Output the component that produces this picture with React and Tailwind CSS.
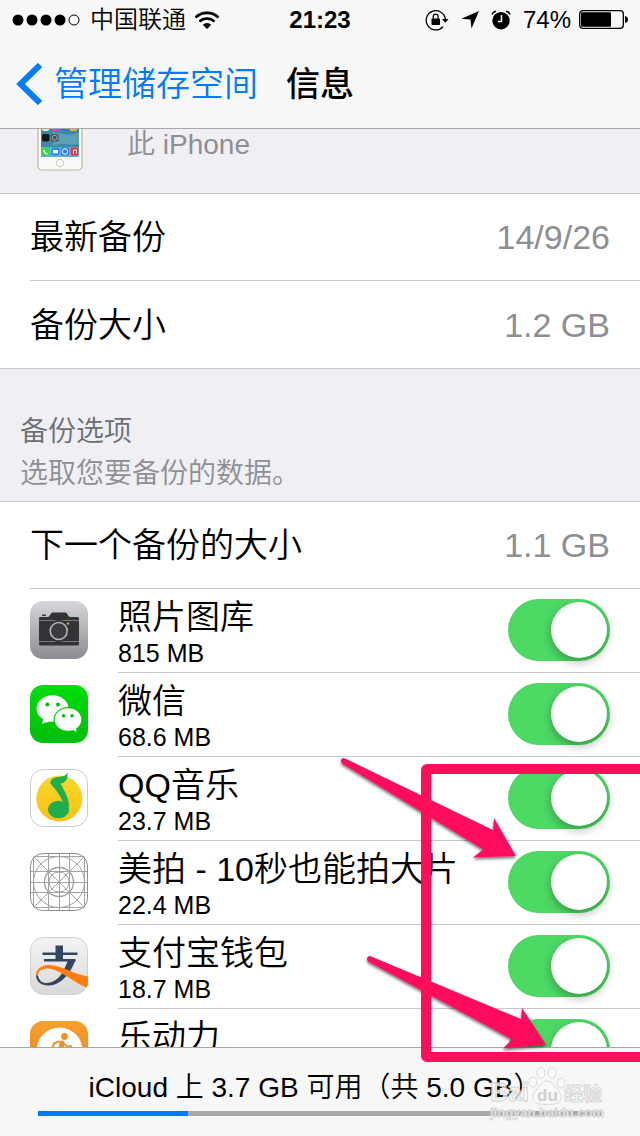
import { useState } from 'react';

const PhotosIcon = () => (
  <svg viewBox="0 0 58 58" className="h-full w-full" aria-hidden="true">
    <defs>
      <linearGradient id="photosBg" x1="0" y1="0" x2="0" y2="1">
        <stop offset="0" stopColor="#d6d7da" />
        <stop offset="1" stopColor="#8b8d92" />
      </linearGradient>
    </defs>
    <rect width="58" height="58" rx="13" fill="url(#photosBg)" />
    <path d="M10 16h8c2 0 2.500-4.500 4.500-4.500h13c2 0 2.500 4.500 4.500 4.500h7.500a1.500 1.500 0 0 1 1.500 1.500v25.500a1.500 1.500 0 0 1-1.500 1.500h-37A1.500 1.500 0 0 1 9 43V17.500A1.500 1.500 0 0 1 10 16z" fill="#323335" />
    <rect x="12" y="13.500" width="4" height="1.500" rx=".7" fill="#323335" />
    <path d="M9 19.500h40M9 40.500h40" stroke="#77797c" strokeWidth="1" />
    <circle cx="28.700" cy="30" r="11" fill="#323335" />
    <circle cx="28.700" cy="30" r="8.500" fill="#3b3c3f" stroke="#b4b5b8" strokeWidth="1.600" />
    <circle cx="38" cy="22.500" r="1.200" fill="#e0a030" />
  </svg>
);

const WeChatIcon = () => (
  <svg viewBox="0 0 58 58" className="h-full w-full" aria-hidden="true">
    <defs>
      <linearGradient id="wechatBg" x1="0" y1="0" x2="0" y2="1">
        <stop offset="0" stopColor="#00de0c" />
        <stop offset="1" stopColor="#00be0a" />
      </linearGradient>
    </defs>
    <rect width="58" height="58" rx="13" fill="url(#wechatBg)" />
    <path d="M12 39l1.500-6.500 7 3.500z" fill="#fff" />
    <ellipse cx="22.500" cy="23.500" rx="16" ry="13.200" fill="#fff" />
    <circle cx="17.300" cy="19.500" r="2" fill="#00b80a" />
    <circle cx="28" cy="19.500" r="2" fill="#00b80a" />
    <ellipse cx="38" cy="34.500" rx="14.500" ry="12.500" fill="#00cc0b" />
    <path d="M46.500 47l-6-3.500 5.500-2z" fill="#fff" />
    <ellipse cx="38" cy="34.500" rx="13.300" ry="11.300" fill="#fff" />
    <circle cx="33.500" cy="30.700" r="1.700" fill="#00b80a" />
    <circle cx="42" cy="30.700" r="1.700" fill="#00b80a" />
  </svg>
);

const QQMusicIcon = () => (
  <svg viewBox="0 0 58 58" className="h-full w-full" aria-hidden="true">
    <defs>
      <linearGradient id="musicBg" x1="0" y1="0" x2="0" y2="1">
        <stop offset="0" stopColor="#fbd62c" />
        <stop offset="1" stopColor="#f8c00e" />
      </linearGradient>
    </defs>
    <rect x=".5" y=".5" width="57" height="57" rx="13" fill="#fff" stroke="#c9cacd" />
    <circle cx="29.300" cy="29.500" r="23" fill="url(#musicBg)" />
    <path d="M37.500 3.500C36 7 33 7.500 28.500 8 23 8.600 20.500 10.500 20.300 14.500c4.500 4.500 9 11 12.500 18L39 38c0-9-4-15-8.500-23.500 5-.5 8-5 7-11z" fill="#1fae4f" />
    <ellipse cx="28.500" cy="40.500" rx="10.600" ry="8.800" fill="#1fae4f" />
  </svg>
);

const BlueprintIcon = () => (
  <svg viewBox="0 0 58 58" className="h-full w-full" aria-hidden="true">
    <defs>
      <clipPath id="blueprintClip">
        <rect width="58" height="58" rx="13" />
      </clipPath>
    </defs>
    <g fill="none" stroke="#a3a3a3" strokeWidth="1" clipPath="url(#blueprintClip)">
      <path d="M3.500 0v58M18.500 0v58M29.500 0v58M39.500 0v58M54.500 0v58" />
      <path d="M0 3.500h58M0 18.500h58M0 29.500h58M0 39.500h58M0 54.500h58" />
      <path d="M0 0l58 58M58 0L0 58" />
      <circle cx="29" cy="29" r="25.500" />
      <circle cx="29" cy="29" r="14.500" strokeWidth="1.400" />
      <circle cx="29" cy="29" r="10" />
    </g>
    <rect x=".5" y=".5" width="57" height="57" rx="12.500" fill="none" stroke="#8f8f8f" />
  </svg>
);

const AlipayIcon = () => (
  <svg viewBox="0 0 58 58" className="h-full w-full" aria-hidden="true">
    <defs>
      <linearGradient id="alipayBg" x1="0" y1="0" x2="0" y2="1">
        <stop offset="0" stopColor="#f4f4f4" />
        <stop offset="1" stopColor="#d9d9d9" />
      </linearGradient>
      <clipPath id="alipayClip">
        <rect width="58" height="58" rx="13" />
      </clipPath>
    </defs>
    <rect x=".5" y=".5" width="57" height="57" rx="13" fill="url(#alipayBg)" stroke="#cfcfcf" />
    <g clipPath="url(#alipayClip)">
      <rect x="25.500" y="8.500" width="7.500" height="14" fill="#34465f" />
      <rect x="12.500" y="15.500" width="35" height="2.500" fill="#34465f" />
      <rect x="14" y="22" width="31.500" height="2.500" fill="#34465f" />
      <path d="M38 23h7.500C42 32 38 38 33 42.500 27 48 19 50 12.500 47.500 8.500 46 6 42.500 6 38l2 .5c1 5 4 7.500 8.500 7.500 6 0 11-3.500 15-9 2.500-4 4.500-8.500 6.500-14z" fill="#34465f" />
      <path d="M6 38c0-5.500 5-10 13-10 12 0 24 9 39 11.500V51C45 47 32 33 18 31.500 12 31 8 34 8 38.500z" fill="#ff7d0d" />
    </g>
  </svg>
);

const LedongliIcon = () => (
  <svg viewBox="0 0 58 58" className="h-full w-full" aria-hidden="true">
    <defs>
      <linearGradient id="ledongBg" x1="0" y1="0" x2="0" y2="1">
        <stop offset="0" stopColor="#f6a02f" />
        <stop offset="1" stopColor="#f07c1a" />
      </linearGradient>
    </defs>
    <rect width="58" height="58" rx="13" fill="url(#ledongBg)" />
    <circle cx="29.500" cy="29.500" r="23" fill="#fff" />
    <g fill="none" stroke="#f18f28" strokeLinecap="round" strokeLinejoin="round">
      <circle cx="34.500" cy="15.500" r="3.400" fill="#f18f28" stroke="none" />
      <path d="M32 22l-2 10" strokeWidth="5" />
      <path d="M29 20.500l-5 2-2 5M34 23l4 3 3-1M30 33l6 4-1 8M29 33l-3 7-6 2" strokeWidth="2" />
    </g>
  </svg>
);

// Bottom part of the handset, the rest is scrolled under the bar
const HandsetIcon = () => (
  <svg viewBox="0 0 46 42" className="h-[42px] w-[46px]" aria-hidden="true">
    <path d="M1 -4V37a4 4 0 0 0 4 4h36a4 4 0 0 0 4-4V-4z" fill="#fbfaf8" stroke="#bfb5a8" strokeWidth="1.200" />
    <rect x="4" y="-4" width="38" height="32" fill="#3e8aa6" />
    <path d="M16 3c8 2 14 4 26 1v10c-8 4-16-2-26 3z" fill="#72b0c0" opacity=".6" />
    <rect x="4" y="18" width="38" height="10" fill="#62b4d0" />
    <rect x="5" y="-4" width="7" height="6" rx="1.500" fill="#d7efc3" />
    <rect x="15" y="-4" width="7" height="6" rx="1.500" fill="#c44dd0" />
    <rect x="24" y="-4" width="7" height="6" rx="1.500" fill="#2f6fe0" />
    <rect x="33" y="-4" width="7" height="6" rx="1.500" fill="#e8b63a" />
    <rect x="5" y="5" width="7.500" height="7.500" rx="1.700" fill="#16181a" />
    <rect x="14" y="5" width="7.500" height="7.500" rx="1.700" fill="#4c4f54" />
    <circle cx="17.700" cy="8.700" r="2.500" fill="none" stroke="#aaa" />
    <rect x="5" y="18.500" width="8" height="8" rx="1.700" fill="#3fd150" />
    <path d="M7 21c0 2 1.500 4 3.500 4" stroke="#fff" strokeWidth="1.300" fill="none" />
    <rect x="14.500" y="18.500" width="8" height="8" rx="1.700" fill="#2a8cf2" />
    <rect x="16" y="21" width="5" height="3.300" fill="#fff" />
    <rect x="24" y="18.500" width="8" height="8" rx="1.700" fill="#2a7de8" />
    <circle cx="28" cy="22.500" r="2.700" fill="none" stroke="#fff" />
    <rect x="33.500" y="18.500" width="8" height="8" rx="1.700" fill="#ef3346" />
    <path d="M36.500 25v-4h3v3.500" stroke="#fff" fill="none" />
    <circle cx="23" cy="34" r="3.700" fill="#fff" stroke="#c9c5bf" />
  </svg>
);

const SignalDots = () => (
  <svg viewBox="0 0 68 12" className="h-3 w-[68px]" aria-hidden="true">
    {[6, 20, 34, 48].map((cx) => (
      <circle key={cx} cx={cx} cy="6" r="5.500" />
    ))}
    <circle cx="62" cy="6" r="5" fill="none" stroke="#000" />
  </svg>
);

const WifiIcon = () => (
  <svg viewBox="0 0 26 20" className="h-5 w-[26px]" aria-hidden="true">
    <g fill="none" stroke="#000" strokeWidth="2.600">
      <path d="M1.500 7.500a16.500 16.500 0 0 1 23 0" />
      <path d="M5.500 11.600a10.700 10.700 0 0 1 15 0" />
    </g>
    <path d="M8.800 14.800a6 6 0 0 1 8.400 0L13 19z" />
  </svg>
);

const RotationLockIcon = () => (
  <svg viewBox="0 0 24 22" className="h-[22px] w-6" aria-hidden="true">
    <path d="M20.300 10A9.600 9.600 0 1 0 18 17.700" fill="none" stroke="#000" strokeWidth="1.300" />
    <path d="M17 10h6.500l-3.300 3.800z" />
    <rect x="6.500" y="9.500" width="8.500" height="6.500" rx=".8" />
    <path d="M8.300 10V7.500a2.400 2.400 0 0 1 4.800 0V10" fill="none" stroke="#000" strokeWidth="1.300" />
  </svg>
);

const LocationIcon = () => (
  <svg viewBox="0 0 18 18" className="h-[18px] w-[18px]" aria-hidden="true">
    <path d="M18 0L10.500 17.500 9.500 8.500.3 7.700z" />
  </svg>
);

const AlarmIcon = () => (
  <svg viewBox="0 0 20 20" className="h-5 w-5" aria-hidden="true">
    <circle cx="10" cy="10.700" r="8.700" />
    <path d="M1 4.500A5 5 0 0 1 5 1.300M19 4.500a5 5 0 0 0-4-3.200" fill="none" stroke="#000" strokeWidth="1.600" />
    <path d="M10.500 5v6.500H7" fill="none" stroke="#f7f7f7" strokeWidth="1.500" />
  </svg>
);

const BatteryIcon = () => (
  <svg viewBox="0 0 49 20" className="h-5 w-[49px]" aria-hidden="true">
    <rect x=".7" y=".7" width="43.600" height="17.600" rx="3" fill="none" stroke="#000" strokeWidth="1.300" />
    <rect x="2" y="2.200" width="30" height="14.600" rx="1" />
    <path d="M46 6c2 .3 3 1.700 3 3.500S48 12.700 46 13z" />
  </svg>
);

const apps = [
  { id: 'photos', name: '照片图库', size: '815 MB', icon: PhotosIcon },
  { id: 'wechat', name: '微信', size: '68.6 MB', icon: WeChatIcon },
  { id: 'qqmusic', name: 'QQ音乐', size: '23.7 MB', icon: QQMusicIcon },
  { id: 'meipai', name: '美拍 - 10秒也能拍大片', size: '22.4 MB', icon: BlueprintIcon },
  { id: 'alipay', name: '支付宝钱包', size: '18.7 MB', icon: AlipayIcon },
  { id: 'ledongli', name: '乐动力', size: '', icon: LedongliIcon },
];

const storage = { used: 26.6 };

const InfoRow = ({ label, value, last }) => (
  <div className={last ? 'pl-[30px] pt-px' : 'ml-[30px] border-b border-[#c8c7cc]'}>
    <div className="flex h-[86px] items-center justify-between pr-[30px] text-[34px] leading-10">
      <dt>{label}</dt>
      <dd className="text-[#8e8e93]">{value}</dd>
    </div>
  </div>
);

const AppRow = ({ app, checked, onToggle }) => {
  const Icon = app.icon;
  return (
    <li className="flex h-[84px] pl-[30px]">
      <div className="mt-3 mr-[30px] h-[58px] w-[58px] shrink-0">
        <Icon />
      </div>
      <div className="flex min-w-0 flex-1 items-start justify-between border-b border-[#c8c7cc] pr-[30px]">
        <label htmlFor={app.id} className="pt-2 whitespace-nowrap">
          <span className="block text-[34px] leading-10">{app.name}</span>
          <span className="block text-[25px] leading-8">{app.size}</span>
        </label>
        <input
          id={app.id}
          type="checkbox"
          role="switch"
          checked={checked}
          onChange={() => onToggle(app.id)}
          className="mt-[10px] flex h-[62px] w-[102px] shrink-0 appearance-none items-center rounded-full bg-gray-200 px-[3px] before:h-14 before:w-14 before:rounded-full before:bg-white before:shadow-[0_4px_10px_rgba(0,0,0,0.3)] checked:justify-end checked:bg-[#4cd964]"
        />
      </div>
    </li>
  );
};

// Frame and arrows over the switches
const Markup = () => (
  <svg
    viewBox="0 0 304 312"
    className="pointer-events-none absolute right-0 bottom-[70px] h-[312px] w-[304px]"
    aria-hidden="true"
  >
    <defs>
      <filter id="markShadow" x="-10%" y="-10%" width="120%" height="130%">
        <feDropShadow dx="0" dy="2" stdDeviation="1.500" floodColor="#000" floodOpacity=".55" />
      </filter>
    </defs>
    <g fill="#ff0f5b" filter="url(#markShadow)">
      <path d="M8 4l149 72 1-12 22 38-43 1.500 10-8L6 9.500C4 7 5 4 8 4z" />
      <path d="M34 202l151 63 1-11 24 36.500-43 4 9-9L32 207.500c-2-2-1-5.500 2-5.500z" />
    </g>
    <rect x="90" y="15" width="240" height="288" rx="1" fill="none" stroke="#ff0f5b" strokeWidth="10" strokeLinejoin="round" />
  </svg>
);

const Watermark = () => (
  <svg
    viewBox="0 0 120 60"
    className="pointer-events-none absolute right-[32px] bottom-3 h-[60px] w-[120px]"
    fontFamily='"Liberation Sans", "Noto Sans CJK SC", sans-serif'
    fontWeight="bold"
    fill="#f7f7f7"
    fillOpacity=".8"
    stroke="#d2d2d2"
    strokeWidth=".8"
    aria-hidden="true"
  >
    <text x="2" y="37" fontSize="25">Bai</text>
    <ellipse cx="53" cy="9" rx="4" ry="5.500" />
    <ellipse cx="64" cy="9" rx="4" ry="5.500" />
    <ellipse cx="45" cy="18" rx="4" ry="5" />
    <ellipse cx="73" cy="19" rx="4" ry="5" />
    <path d="M59 17c5 0 7 5 11 9 5 5 4 13-3 14-5 .5-11 .5-16 0-7-1-8-9-3-14 4-4 6-9 11-9z" />
    <text x="49" y="37" fontSize="17" fill="#c4c4c4" stroke="none">du</text>
    <text x="76" y="37" fontSize="19">经验</text>
    <text x="2" y="53" fontSize="13">jingyan.baidu.com</text>
  </svg>
);

const App = () => {
  const [enabled, setEnabled] = useState(() =>
    Object.fromEntries(apps.map((app) => [app.id, true]))
  );

  const handleToggle = (id) => {
    setEnabled({ ...enabled, [id]: !enabled[id] });
  };

  return (
    <div className="relative flex h-screen flex-col overflow-hidden bg-[#efeff4] font-['Liberation_Sans','Noto_Sans_CJK_SC',sans-serif] font-[350] text-black">
      <header className="shrink-0 border-b border-[#a7a7aa] bg-[#f7f7f7]">
        {/* Status bar */}
        <div className="grid h-10 grid-cols-[1fr_auto_1fr] items-center px-3 text-[24px] leading-8">
          <div className="flex items-center">
            <SignalDots />
            <span className="ml-[10px] mr-2">中国联通</span>
            <WifiIcon />
          </div>
          <time className="font-bold">21:23</time>
          <div className="flex items-center justify-end">
            <RotationLockIcon />
            <span className="mx-3">
              <LocationIcon />
            </span>
            <AlarmIcon />
            <span className="mx-2 pl-1">74%</span>
            <BatteryIcon />
          </div>
        </div>

        {/* Navigation */}
        <nav className="grid h-[88px] grid-cols-[1fr_auto_1fr] items-center pl-4 text-[34px] leading-10">
          <button type="button" className="flex items-center gap-3 whitespace-nowrap text-[#007aff]">
            <svg viewBox="0 0 26 42" className="h-[42px] w-[26px]" aria-hidden="true">
              <path d="M24 2L4.500 21 24 40" fill="none" stroke="#007aff" strokeWidth="6" />
            </svg>
            管理储存空间
          </button>
          <h1 className="pr-4 font-medium">信息</h1>
        </nav>
      </header>

      <main className="min-h-0 flex-1 overflow-hidden">
        <section className="flex h-16 items-start pl-[37px]">
          <HandsetIcon />
          <p className="ml-11 text-[28px] leading-8 text-[#8e8e93]">此 iPhone</p>
        </section>

        <dl className="border-y border-[#c8c7cc] bg-white">
          <InfoRow label="最新备份" value="14/9/26" />
          <InfoRow label="备份大小" value="1.2 GB" last />
        </dl>

        <div className="px-5 pt-[42px] pb-[6px] text-[28px] leading-[42px]">
          <h2 className="text-[#6d6d72]">备份选项</h2>
          <p className="text-[#8e8e93]">选取您要备份的数据。</p>
        </div>

        <div className="border-t border-[#c8c7cc] bg-white">
          <dl>
            <InfoRow label="下一个备份的大小" value="1.1 GB" />
          </dl>
          <ul>
            {apps.map((app) => (
              <AppRow key={app.id} app={app} checked={enabled[app.id]} onToggle={handleToggle} />
            ))}
          </ul>
        </div>
      </main>

      <footer className="shrink-0 border-t border-[#a7a7aa] bg-[#f7f7f7] px-[38px] pt-6 pb-5">
        <p className="mb-[7px] pr-[10px] text-center text-[28px] leading-8 whitespace-nowrap">
          iCloud 上 3.7 GB 可用（共 5.0 GB）
        </p>
        <div
          role="progressbar"
          aria-label="iCloud"
          aria-valuenow={storage.used}
          className="h-[5px] bg-[#a8a8a8]"
        >
          <div className="h-full bg-[#007aff]" style={{ width: `${storage.used}%` }} />
        </div>
      </footer>

      <Markup />
      <Watermark />
    </div>
  );
};

export default App;
